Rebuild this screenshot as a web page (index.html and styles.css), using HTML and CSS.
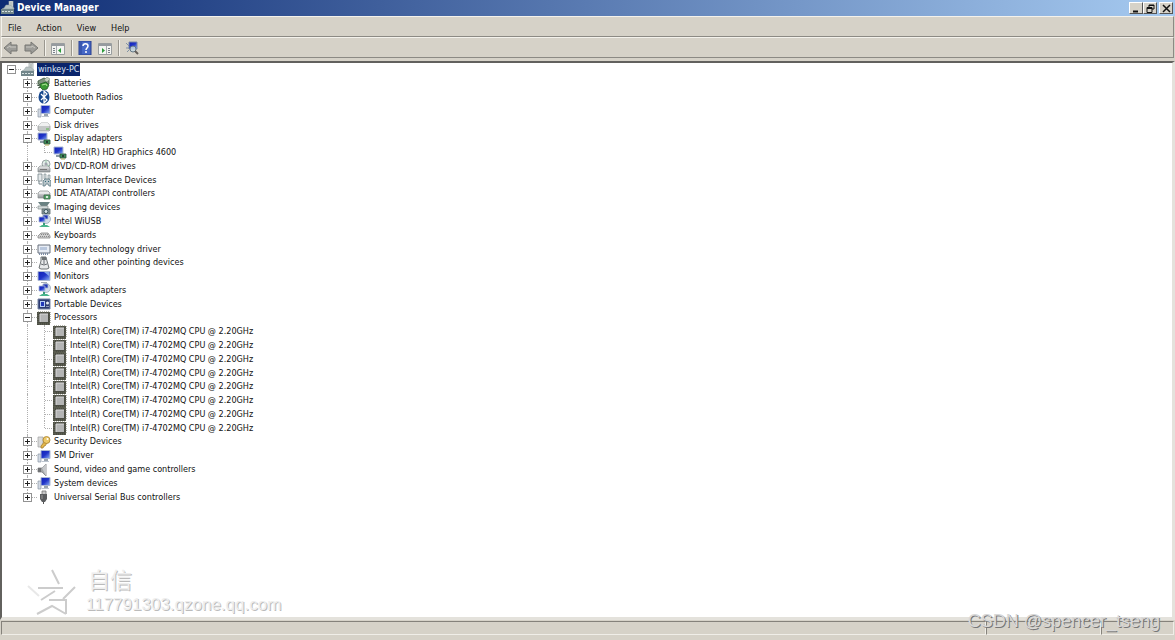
FILE: index.html
```html
<!DOCTYPE html>
<html lang="en">
<head>
    <meta charset="UTF-8">
    <meta name="viewport" content="width=device-width, initial-scale=1.0">
    <title>Device Manager</title>
    <link rel="stylesheet" href="styles.css">
</head>
<body>
    <svg class="sprite" aria-hidden="true">
        <defs>
            <linearGradient id="screenFill" x1="0" y1="0" x2="1" y2="1">
                <stop offset="0" stop-color="#1020b8"/>
                <stop offset=".5" stop-color="#2034c8"/>
                <stop offset="1" stop-color="#8fb4f4"/>
            </linearGradient>
            <linearGradient id="metalFill" x1="0" y1="0" x2="0" y2="1">
                <stop offset="0" stop-color="#f2f2f2"/>
                <stop offset="1" stop-color="#909498"/>
            </linearGradient>
        </defs>
        <symbol id="pc" viewBox="0 0 14 14">
            <path d="M8 0h4v8H8z" fill="#dfe3e3" stroke="#98a0a0" stroke-width=".7"/>
            <path d="M9 2h2M9 4h2" stroke="#839088" stroke-width=".8"/>
            <path d="M3 7l2-3h4l4 3v1H1z" fill="#b9c4c4" stroke="#8d9a9c" stroke-width=".5"/>
            <path d="M0 8h13v5H0z" fill="#71858a"/>
            <path d="M1 10.500h11" stroke="#d7e2e2" stroke-dasharray="2 1"/>
        </symbol>
        <symbol id="battery" viewBox="0 0 14 14">
            <path d="M1 4l6-3 5 2v4l-6 2-5-2z" fill="#80937f" stroke="#39533a" stroke-width=".8"/>
            <path d="M7 3l3-3 3 2-3 3z" fill="#c5d0bf" stroke="#6b7d6b" stroke-width=".5"/>
            <path d="M3 7l6-2 3 3-2 4-4 1-3-3z" fill="#3b9a35" stroke="#245a27" stroke-width=".8"/>
            <path d="M5 8l4-1 1 2" stroke="#b1e59a" fill="none"/>
            <path d="M0 8l3 1M1 11l3-1" stroke="#415443"/>
        </symbol>
        <symbol id="bluetooth" viewBox="0 0 14 14">
            <ellipse cx="7" cy="7" rx="5.500" ry="6.800" fill="#17488e"/>
            <path d="M4 4l6 6-3 3V1l3 3-6 6" fill="none" stroke="#fff" stroke-width="1.200"/>
        </symbol>
        <symbol id="computer" viewBox="0 0 14 14">
            <path d="M1 5h3v8H1z" fill="#d3dae4" stroke="#8996a5" stroke-width=".7"/>
            <path d="M4 1.500h9v8H4z" fill="url(#screenFill)" stroke="#aab8d4"/>
            <path d="M7 10h4v2H7z" fill="#9aa4ae"/>
            <path d="M5 12.500h7" stroke="#bdc5cf"/>
        </symbol>
        <symbol id="disk" viewBox="0 0 14 14">
            <path d="M1 8l3-3h7l2 3v4l-1 1H2l-1-1z" fill="#c5c8c8" stroke="#8d9292" stroke-width=".7"/>
            <path d="M1 8l3-3h7l2 3z" fill="#f0f1f1"/>
            <path d="M9 11h3" stroke="#57b44b"/>
        </symbol>
        <symbol id="display" viewBox="0 0 14 14">
            <path d="M1 1h9v7H1z" fill="url(#screenFill)" stroke="#abb7cf"/>
            <path d="M3 9h5v2H3z" fill="#8c9ba5"/>
            <path d="M7 8h6v4H7z" fill="#3f8f5b" stroke="#30533d" stroke-width=".8"/>
            <path d="M9 9h2v2H9z" fill="#283f33"/>
            <path d="M8 13h4" stroke="#b3ad5c"/>
        </symbol>
        <symbol id="disc" viewBox="0 0 14 14">
            <circle cx="9" cy="5" r="4" fill="#e4ece9" stroke="#849090" stroke-width=".8"/>
            <path d="M9 1v4l3 2" stroke="#9bcca9" fill="none"/>
            <circle cx="9" cy="5" r="1" fill="#fff" stroke="#889"/>
            <path d="M1 9l2-2h8l2 2v4H1z" fill="url(#metalFill)" stroke="#858c8d" stroke-width=".7"/>
            <path d="M3 10.500h7" stroke="#777"/>
        </symbol>
        <symbol id="hid" viewBox="0 0 14 14">
            <path d="M1 1h4v7H1z" fill="#e4e8ea" stroke="#77868c" stroke-width=".8"/>
            <path d="M2 8v3h3" stroke="#77868c" fill="none"/>
            <path d="M7 1h2v5H7zM11 2h2v4h-2z" fill="#d9dfe2" stroke="#77868c" stroke-width=".6"/>
            <path d="M6 8l2-2h4l2 2v5h-2l-1-2H9l-1 2H6z" fill="#b6c3c8" stroke="#5d7a84" stroke-width=".8"/>
            <path d="M8 8.500h1M11 8.500h1" stroke="#32697a"/>
        </symbol>
        <symbol id="ide" viewBox="0 0 14 14">
            <path d="M1 6l2-2h8l2 2v5H1z" fill="url(#metalFill)" stroke="#8b9090" stroke-width=".7"/>
            <path d="M2 6h10" stroke="#fafafa"/>
            <path d="M7 8h6v4H7z" fill="#57a66a" stroke="#376345" stroke-width=".8"/>
            <path d="M9 9h2v2H9z" fill="#dceddd"/>
        </symbol>
        <symbol id="imaging" viewBox="0 0 14 14">
            <path d="M1 1h12l-3 4H4z" fill="#6a8283"/>
            <path d="M1 5h10v3H1z" fill="#d4dbdb" stroke="#849191" stroke-width=".7"/>
            <path d="M5 8h8v5H5z" fill="#89979a" stroke="#58676a" stroke-width=".8"/>
            <circle cx="9" cy="10.500" r="2" fill="#dce7ea" stroke="#35525a"/>
        </symbol>
        <symbol id="network" viewBox="0 0 14 14">
            <circle cx="9" cy="5" r="4.500" fill="#d3dcea" stroke="#9aa9ba" stroke-width=".8"/>
            <path d="M6 1h5v4H6z" fill="#2036b8" stroke="#a9b8d3" stroke-width=".8"/>
            <path d="M2 3h6v5H2z" fill="url(#screenFill)" stroke="#a9b8d3" stroke-width=".8"/>
            <path d="M7 9v3" stroke="#3a9b7b" stroke-width="2"/>
            <path d="M2 13l3-2h5l3 2z" fill="#49b58b"/>
        </symbol>
        <symbol id="keyboard" viewBox="0 0 14 14">
            <path d="M1 8l3-3h7l2 3v2H1z" fill="#cfcfcf" stroke="#858585" stroke-width=".8"/>
            <path d="M4 6.500h7M3 8.500h9" stroke="#888" stroke-dasharray="1 1"/>
        </symbol>
        <symbol id="memory" viewBox="0 0 14 14">
            <path d="M1 3h12v8H1z" fill="#e8edf5" stroke="#68707c"/>
            <path d="M3 5h7v3H3z" fill="#b9c7dd"/>
            <path d="M2 12h9" stroke="#7e8da5" stroke-width="2" stroke-dasharray="1 1"/>
        </symbol>
        <symbol id="mouse" viewBox="0 0 14 14">
            <path d="M4 1h5l1 4 2 7-2 1H4l-2-1 2-7z" fill="#e8eaeb" stroke="#6d7275"/>
            <path d="M5 1h4v3H5z" fill="#6e7375"/>
            <path d="M7 4v4M4 8l3 1 3-1" stroke="#686d72" fill="none"/>
        </symbol>
        <symbol id="monitor" viewBox="0 0 14 14">
            <path d="M1 1.500h12v9H1z" fill="url(#screenFill)" stroke="#acb9d4"/>
            <path d="M7 2h5v4z" fill="#87a8ec"/>
            <path d="M4 12.500h6" stroke="#a6adb6"/>
        </symbol>
        <symbol id="portable" viewBox="0 0 14 14">
            <path d="M1 2h12v10H1z" fill="#2b3a72" stroke="#7785a3"/>
            <path d="M3 4h5v6H3z" fill="#b5cdf5"/>
            <path d="M4 5h3v4H4z" fill="#2037b8"/>
            <circle cx="10.500" cy="6" r="1.500" fill="#e7edf4"/>
            <path d="M9 9.500h3" stroke="#8e9bb8"/>
        </symbol>
        <symbol id="cpu" viewBox="0 0 14 14">
            <path d="M0 1h13v13H0z" fill="#4b4d44"/>
            <path d="M1 1h12v12H1z" fill="none" stroke="#6c6e5d" stroke-dasharray="1 1"/>
            <path d="M3 3h8v8H3z" fill="#b4b5b5"/>
            <path d="M3 11V3h8" fill="none" stroke="#dadada"/>
        </symbol>
        <symbol id="security" viewBox="0 0 14 14">
            <path d="M1 2h5v10H1z" fill="#d9dada" stroke="#a2a2a2" stroke-width=".7"/>
            <path d="M8 6l-4 5v2h2l1-2h1l2-3" fill="#e5b94d" stroke="#a77f2c" stroke-width=".8"/>
            <circle cx="9.500" cy="5" r="3.500" fill="#edc967" stroke="#a77f2c" stroke-width=".8"/>
            <circle cx="10.500" cy="4" r="1" fill="#fff"/>
        </symbol>
        <symbol id="sound" viewBox="0 0 14 14">
            <path d="M1 5h4l4-4v12L5 9H1z" fill="#a2a4a6" stroke="#808284" stroke-width=".8"/>
            <path d="M5 5l4-4v12z" fill="#c6c8ca"/>
            <path d="M1 5h3v4H1z" fill="#6f7173"/>
        </symbol>
        <symbol id="usb" viewBox="0 0 14 14">
            <path d="M5 1h4v4H5z" fill="#c8c8c8" stroke="#777" stroke-width=".8"/>
            <path d="M3 4h7v5l-2 3H5L3 9z" fill="#5b5d5f"/>
            <path d="M5 5v4" stroke="#999"/>
            <path d="M6.500 12v2" stroke="#555"/>
        </symbol>
        <symbol id="back" viewBox="0 0 14 14">
            <path d="M0 7l7-6v3h6v6H7v3z" fill="#9c9c98" stroke="#777773"/>
            <path d="M3 7l3-2v1h6" fill="none" stroke="#c7c6c0"/>
        </symbol>
        <symbol id="pane" viewBox="0 0 14 14">
            <path d="M.5 2.500h13v11H.5z" fill="#f4f5f2" stroke="#9a9e9f"/>
            <path d="M1 3h12v2H1z" fill="#969b9f"/>
            <path d="M5.500 5v8" stroke="#a6abaf"/>
            <path d="M2 7.500h2M2 9.500h2M2 11.500h2" stroke="#777d88"/>
            <path d="M10 7v5L7 9.500z" fill="#2d9b3b"/>
        </symbol>
        <symbol id="help" viewBox="0 0 14 14">
            <path d="M1 0h12v14H1z" fill="#4668c6" stroke="#263d8d"/>
            <path d="M3 1v12" stroke="#2b4497"/>
            <path d="M5 5c0-3 5-3 5 0 0 2-2 2-2 4M8 10v2" fill="none" stroke="#fff" stroke-width="1.500"/>
        </symbol>
        <symbol id="scan" viewBox="0 0 14 14">
            <path d="M1 2l3 3M1 7h3M2 11l2-2" stroke="#8194a5"/>
            <path d="M4 1h8v7H4z" fill="url(#screenFill)" stroke="#7888a6"/>
            <circle cx="8" cy="8" r="3" fill="#c5d7df" fill-opacity=".85" stroke="#637886"/>
            <path d="M10 10l3 3" stroke="#645f5a" stroke-width="2"/>
        </symbol>
    </svg>

    <div class="window">
        <header class="title-bar">
            <svg class="icon"><use href="#pc"/></svg>
            <h1>Device Manager</h1>
            <div class="window-buttons">
                <button type="button" aria-label="Minimize"><svg viewBox="0 0 9 9"><path d="M1 7.500h5" stroke-width="2"/></svg></button>
                <button type="button" aria-label="Restore"><svg viewBox="0 0 9 9"><path d="M3 3V1h5v4H6M3 1.500h5M1 3.500h5v5H1zM1 4.500h5"/></svg></button>
                <button type="button" class="close" aria-label="Close"><svg viewBox="0 0 9 9"><path d="M1 1l7 7M8 1L1 8" stroke-width="1.500"/></svg></button>
            </div>
        </header>

        <nav class="menu-bar">
            <button type="button">File</button>
            <button type="button">Action</button>
            <button type="button">View</button>
            <button type="button">Help</button>
        </nav>

        <div class="toolbar">
            <button type="button" aria-label="Back"><svg class="icon"><use href="#back"/></svg></button>
            <button type="button" aria-label="Forward"><svg class="icon flip"><use href="#back"/></svg></button>
            <span class="separator"></span>
            <button type="button" aria-label="Console tree"><svg class="icon"><use href="#pane"/></svg></button>
            <span class="separator"></span>
            <button type="button" aria-label="Help"><svg class="icon"><use href="#help"/></svg></button>
            <button type="button" aria-label="Action pane"><svg class="icon flip"><use href="#pane"/></svg></button>
            <span class="separator"></span>
            <button type="button" aria-label="Scan"><svg class="icon"><use href="#scan"/></svg></button>
        </div>

        <main class="content">
            <ul class="tree">
                <li class="root"><button type="button" class="toggle open" aria-label="Collapse"></button><svg class="icon"><use href="#pc"/></svg><span class="selected">winkey-PC</span></li>
                <li class="group"><button type="button" class="toggle" aria-label="Expand"></button><svg class="icon"><use href="#battery"/></svg><span>Batteries</span></li>
                <li class="group"><button type="button" class="toggle" aria-label="Expand"></button><svg class="icon"><use href="#bluetooth"/></svg><span>Bluetooth Radios</span></li>
                <li class="group"><button type="button" class="toggle" aria-label="Expand"></button><svg class="icon"><use href="#computer"/></svg><span>Computer</span></li>
                <li class="group"><button type="button" class="toggle" aria-label="Expand"></button><svg class="icon"><use href="#disk"/></svg><span>Disk drives</span></li>
                <li class="group"><button type="button" class="toggle open" aria-label="Collapse"></button><svg class="icon"><use href="#display"/></svg><span>Display adapters</span></li>
                <li class="device last"><svg class="icon"><use href="#display"/></svg><span>Intel(R) HD Graphics 4600</span></li>
                <li class="group"><button type="button" class="toggle" aria-label="Expand"></button><svg class="icon"><use href="#disc"/></svg><span>DVD/CD-ROM drives</span></li>
                <li class="group"><button type="button" class="toggle" aria-label="Expand"></button><svg class="icon"><use href="#hid"/></svg><span>Human Interface Devices</span></li>
                <li class="group"><button type="button" class="toggle" aria-label="Expand"></button><svg class="icon"><use href="#ide"/></svg><span>IDE ATA/ATAPI controllers</span></li>
                <li class="group"><button type="button" class="toggle" aria-label="Expand"></button><svg class="icon"><use href="#imaging"/></svg><span>Imaging devices</span></li>
                <li class="group"><button type="button" class="toggle" aria-label="Expand"></button><svg class="icon"><use href="#network"/></svg><span>Intel WiUSB</span></li>
                <li class="group"><button type="button" class="toggle" aria-label="Expand"></button><svg class="icon"><use href="#keyboard"/></svg><span>Keyboards</span></li>
                <li class="group"><button type="button" class="toggle" aria-label="Expand"></button><svg class="icon"><use href="#memory"/></svg><span>Memory technology driver</span></li>
                <li class="group"><button type="button" class="toggle" aria-label="Expand"></button><svg class="icon"><use href="#mouse"/></svg><span>Mice and other pointing devices</span></li>
                <li class="group"><button type="button" class="toggle" aria-label="Expand"></button><svg class="icon"><use href="#monitor"/></svg><span>Monitors</span></li>
                <li class="group"><button type="button" class="toggle" aria-label="Expand"></button><svg class="icon"><use href="#network"/></svg><span>Network adapters</span></li>
                <li class="group"><button type="button" class="toggle" aria-label="Expand"></button><svg class="icon"><use href="#portable"/></svg><span>Portable Devices</span></li>
                <li class="group"><button type="button" class="toggle open" aria-label="Collapse"></button><svg class="icon"><use href="#cpu"/></svg><span>Processors</span></li>
                <li class="device"><svg class="icon"><use href="#cpu"/></svg><span>Intel(R) Core(TM) i7-4702MQ CPU @ 2.20GHz</span></li>
                <li class="device"><svg class="icon"><use href="#cpu"/></svg><span>Intel(R) Core(TM) i7-4702MQ CPU @ 2.20GHz</span></li>
                <li class="device"><svg class="icon"><use href="#cpu"/></svg><span>Intel(R) Core(TM) i7-4702MQ CPU @ 2.20GHz</span></li>
                <li class="device"><svg class="icon"><use href="#cpu"/></svg><span>Intel(R) Core(TM) i7-4702MQ CPU @ 2.20GHz</span></li>
                <li class="device"><svg class="icon"><use href="#cpu"/></svg><span>Intel(R) Core(TM) i7-4702MQ CPU @ 2.20GHz</span></li>
                <li class="device"><svg class="icon"><use href="#cpu"/></svg><span>Intel(R) Core(TM) i7-4702MQ CPU @ 2.20GHz</span></li>
                <li class="device"><svg class="icon"><use href="#cpu"/></svg><span>Intel(R) Core(TM) i7-4702MQ CPU @ 2.20GHz</span></li>
                <li class="device last"><svg class="icon"><use href="#cpu"/></svg><span>Intel(R) Core(TM) i7-4702MQ CPU @ 2.20GHz</span></li>
                <li class="group"><button type="button" class="toggle" aria-label="Expand"></button><svg class="icon"><use href="#security"/></svg><span>Security Devices</span></li>
                <li class="group"><button type="button" class="toggle" aria-label="Expand"></button><svg class="icon"><use href="#computer"/></svg><span>SM Driver</span></li>
                <li class="group"><button type="button" class="toggle" aria-label="Expand"></button><svg class="icon"><use href="#sound"/></svg><span>Sound, video and game controllers</span></li>
                <li class="group"><button type="button" class="toggle" aria-label="Expand"></button><svg class="icon"><use href="#computer"/></svg><span>System devices</span></li>
                <li class="group last"><button type="button" class="toggle" aria-label="Expand"></button><svg class="icon"><use href="#usb"/></svg><span>Universal Serial Bus controllers</span></li>
            </ul>
        </main>

        <footer class="status-bar">
            <span></span>
            <span></span>
            <span></span>
        </footer>

        <div class="site-mark">
            <svg viewBox="0 0 50 48">
                <path class="faint" d="M1 17l11 10"/>
                <path d="M25 1l7 14M11 19h25M14 31l14-9M48 18L36 30M22 31h17v14M39 45l-14-8-15 8"/>
            </svg>
            <div>
                <p class="site-name">自信</p>
                <p class="site-address">117791303.qzone.qq.com</p>
            </div>
        </div>
        <p class="author-mark">CSDN @spencer_tseng</p>
    </div>
</body>
</html>
```
FILE: styles.css
```css
* {
    box-sizing: border-box;
}

body {
    margin: 0;
    background-color: #d6d2c8;
    color: #111;
    font-family: "DejaVu Sans Condensed", "DejaVu Sans", sans-serif;
    font-size: 9px;
}

button {
    padding: 0;
    border: 0;
    background: none;
    color: inherit;
    font: inherit;
}

p,
h1,
ul {
    margin: 0;
    padding: 0;
}

.sprite {
    position: absolute;
    width: 0;
    height: 0;
}

.window {
    position: relative;
    display: flex;
    flex-direction: column;
    min-height: 100vh;
}

.icon {
    display: block;
    flex: none;
    width: 14px;
    height: 14px;
}

.flip {
    transform: scaleX(-1);
}

/* title bar */
.title-bar {
    display: flex;
    align-items: center;
    gap: 2px;
    height: 16px;
    padding: 0 2px 0 1px;
    background: linear-gradient(to right, #0e2c74, #a6caf0);
    color: #fff;
}

.title-bar h1 {
    font-size: 10px;
    line-height: 16px;
}

.window-buttons {
    display: flex;
    margin-left: auto;
}

.window-buttons button {
    display: flex;
    align-items: center;
    justify-content: center;
    width: 14px;
    height: 12px;
    border: 1px solid;
    border-color: #fff #555 #555 #fff;
    background-color: #d6d2c8;
}

.window-buttons .close {
    margin-left: 2px;
}

.window-buttons svg {
    width: 9px;
    height: 9px;
    fill: none;
    stroke: #111;
}

/* menu and toolbar */
.menu-bar,
.toolbar {
    display: flex;
    align-items: center;
    height: 21px;
    margin: 0 1px;
    border: 1px solid;
    border-color: #f4f2ec #8c8a84 #8c8a84 #f4f2ec;
}

.menu-bar {
    gap: 15px;
    padding: 2px 6px 0;
}

.toolbar {
    gap: 5px;
    padding: 0 2px;
    margin-bottom: 3px;
}

.toolbar button {
    width: 15px;
}

.separator {
    width: 2px;
    height: 16px;
    border-left: 1px solid #9a978f;
    border-right: 1px solid #f4f2ec;
}

/* device tree */
.content {
    flex: 1;
    border: 2px solid;
    border-color: #62615e #e4e2dc #e4e2dc #62615e;
    border-right-width: 3px;
    border-bottom-width: 3px;
    background-color: #fff;
}

.tree {
    display: grid;
    grid-template-rows: repeat(32, 1fr);
    height: 441px;
    list-style: none;
}

.tree li {
    position: relative;
    display: flex;
    align-items: center;
    min-height: 0;
    line-height: 13px;
}

.tree .root {
    padding-left: 5px;
}

.tree .group {
    padding-left: 21px;
}

.tree .device {
    padding-left: 51px;
}

.tree .icon {
    margin-right: 3px;
}

.tree span {
    white-space: nowrap;
}

.root .selected {
    padding: 0 1px;
    margin-left: -1px;
    background-color: #0a246a;
    color: #dfe6f5;
}

.toggle {
    position: relative;
    z-index: 1;
    width: 9px;
    height: 9px;
    margin-right: 5px;
    border: 1px solid #929292;
    background:
        linear-gradient(#222, #222) center / 5px 1px no-repeat,
        linear-gradient(#222, #222) center / 1px 5px no-repeat,
        #fff;
}

.toggle.open {
    background: linear-gradient(#222, #222) center / 5px 1px no-repeat, #fff;
}

/* dotted guide lines */
.group::before,
.device::before {
    content: "";
    position: absolute;
    top: 0;
    bottom: 0;
    left: 25px;
    border-left: 1px dotted #b0b0b0;
}

.group.last::before {
    bottom: 50%;
}

.device::after {
    content: "";
    position: absolute;
    top: 0;
    bottom: 0;
    left: 42px;
    border-left: 1px dotted #b0b0b0;
}

.device.last::after {
    bottom: 50%;
}

.toggle::after {
    content: "";
    position: absolute;
    top: 3px;
    left: 8px;
    width: 5px;
    border-top: 1px dotted #b0b0b0;
}

.device {
    background: repeating-linear-gradient(to right, #b0b0b0 0 1px, transparent 1px 2px) 43px 50% / 8px 1px no-repeat;
}

/* status bar */
.status-bar {
    display: grid;
    grid-template-columns: 987fr 115fr 73fr;
    height: 20px;
    padding: 1px 1px 3px;
    border-bottom: 2px solid #d6d2c8;
}

.status-bar span {
    border: 1px solid;
    border-color: #85827b #f0eee8 #f0eee8 #85827b;
}

/* marks over the window */
.site-mark {
    position: absolute;
    bottom: 23px;
    left: 27px;
    display: flex;
    gap: 9px;
    align-items: center;
    color: #eee;
    text-shadow: 1px 1px 0 #bbb;
}

.site-mark svg {
    width: 50px;
    height: 48px;
    fill: none;
    stroke: #ccc;
    stroke-width: 2;
}

.site-mark .faint {
    stroke: #e8e8e8;
}

.site-name {
    padding-left: 2px;
    font-family: "Liberation Sans", "Noto Sans CJK SC", sans-serif;
    font-size: 22px;
    line-height: 24px;
}

.site-address {
    font-family: "Liberation Sans", sans-serif;
    font-size: 17px;
    line-height: 24px;
}

.author-mark {
    position: absolute;
    right: 15px;
    bottom: 8px;
    color: #d8d8d8;
    font-family: "Liberation Sans", sans-serif;
    font-size: 18px;
    line-height: 22px;
    text-shadow: 1px 1px 0 #777;
}
```
